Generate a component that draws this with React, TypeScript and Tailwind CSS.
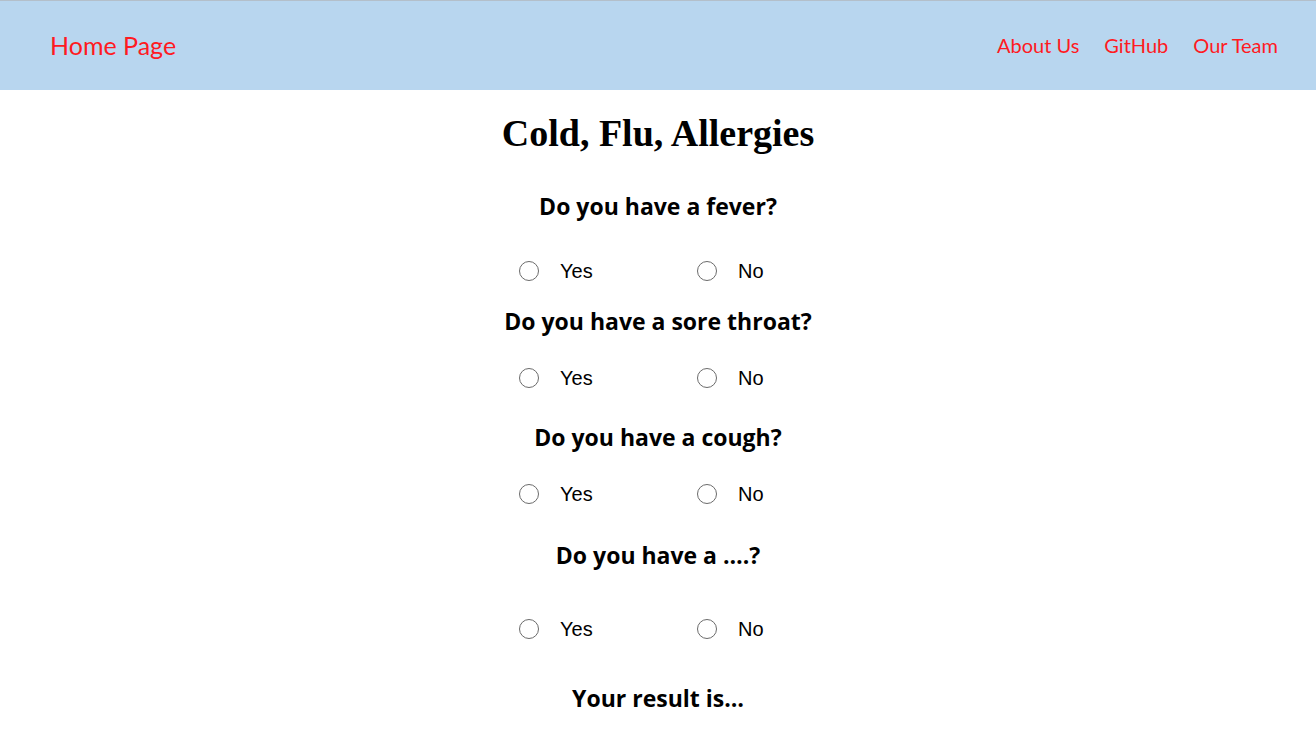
const questions = [
  { text: 'Do you have a fever?', qClass: 'mt-[38px]', rowClass: 'mt-[38px]' },
  { text: 'Do you have a sore throat?', qClass: 'mt-[23px]', rowClass: 'mt-[30px]' },
  { text: 'Do you have a cough?', qClass: 'mt-[32px]', rowClass: 'mt-[30px]' },
  { text: 'Do you have a ….?', qClass: 'mt-[34px]', rowClass: 'mt-[47px]' },
];

const Radio = ({ name, label, className }: { name: string; label: string; className: string }) => (
  <label className={`flex items-center gap-[21px] ${className}`}>
    <input
      type="radio"
      name={name}
      className="appearance-none w-5 h-5 rounded-full border border-[#6b6b6b] bg-white checked:bg-[#6b6b6b]"
    />
    <span className="font-['Liberation_Sans',Arial,sans-serif] text-[20px] leading-6 text-black">{label}</span>
  </label>
);

export default function App() {
  return (
    <div className="min-h-screen bg-white">
      <header className="h-[90px] border-t border-[#b3bfca] bg-[#b8d6ef] flex items-center justify-between pl-[50px] pr-[38px] font-['Lato','Open_Sans',sans-serif] text-[#ff1a22]">
        <a href="#" className="text-[25px]">Home Page</a>
        <nav className="flex items-center gap-[25px] text-[20px] -mt-px">
          <a href="#">About Us</a>
          <a href="#">GitHub</a>
          <a href="#">Our Team</a>
        </nav>
      </header>

      <main className="flex flex-col items-center pt-[23px] text-black">
        <h1 className="h-10 leading-10 font-['Liberation_Serif',serif] font-bold text-[38px]">
          Cold, Flu, Allergies
        </h1>

        {questions.map((q, i) => (
          <div key={i} className="flex flex-col items-center">
            <h2 className={`h-[30px] leading-[30px] font-['Open_Sans',sans-serif] font-bold text-[23px] ${q.qClass}`}>
              {q.text}
            </h2>
            <div className={`flex w-[278px] ${q.rowClass}`}>
              <Radio name={`q${i}`} label="Yes" className="w-[178px]" />
              <Radio name={`q${i}`} label="No" className="w-[100px]" />
            </div>
          </div>
        ))}

        <h2 className="mt-[42px] h-[30px] leading-[30px] font-['Open_Sans',sans-serif] font-bold text-[23px]">
          Your result is…
        </h2>
      </main>
    </div>
  );
}
